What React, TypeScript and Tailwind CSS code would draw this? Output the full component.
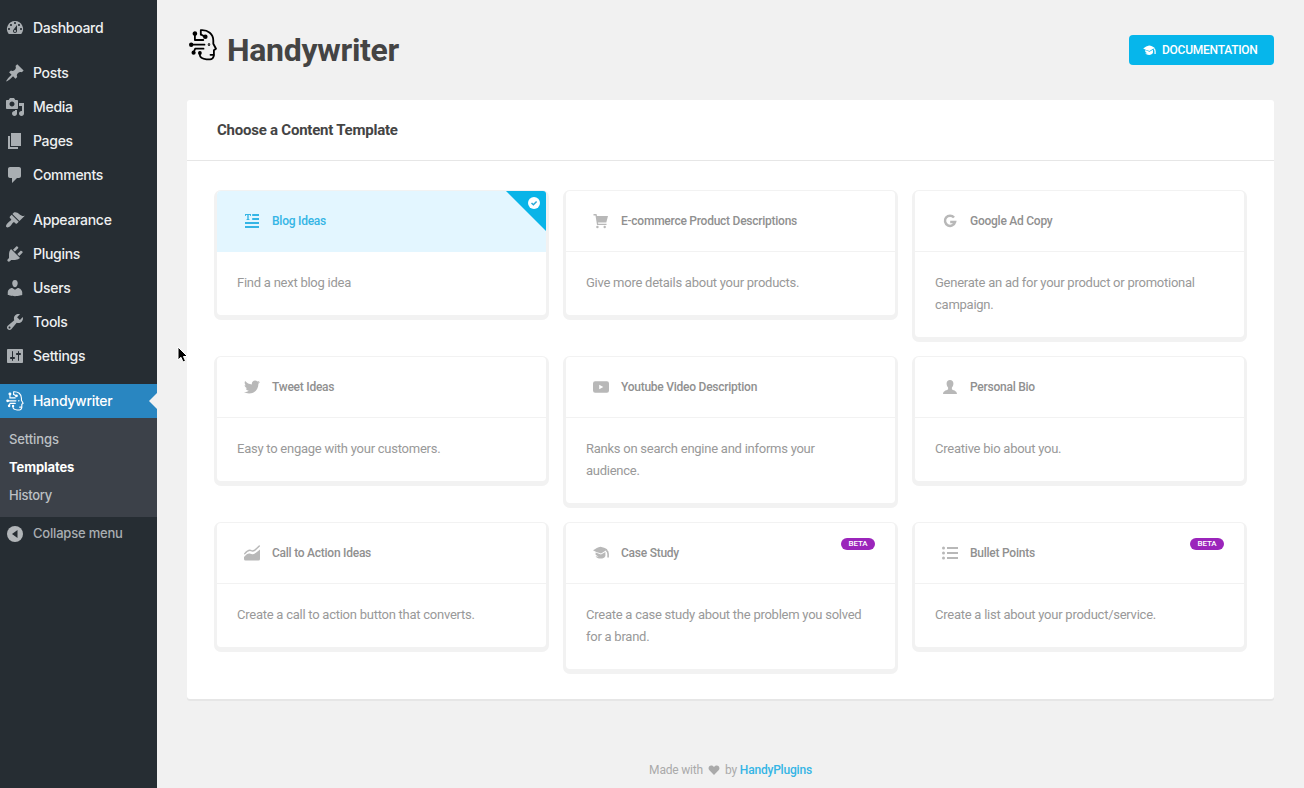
import React from "react";
import { FaTwitter } from "react-icons/fa";

const menuPaths = {
  dashboard:
    "M3.76 16h12.48A7.998 7.998 0 0 0 10 3a7.998 7.998 0 0 0-6.24 13zM10 4c.55 0 1 .45 1 1s-.45 1-1 1-1-.45-1-1 .45-1 1-1zM6 6c.55 0 1 .45 1 1s-.45 1-1 1-1-.45-1-1 .45-1 1-1zm8 0c.55 0 1 .45 1 1s-.45 1-1 1-1-.45-1-1 .45-1 1-1zm-5.37 5.55L12 7v6c0 1.1-.9 2-2 2s-2-.9-2-2c0-.57.24-1.08.63-1.45zM4 10c.55 0 1 .45 1 1s-.45 1-1 1-1-.45-1-1 .45-1 1-1zm12 0c.55 0 1 .45 1 1s-.45 1-1 1-1-.45-1-1 .45-1 1-1zm-5 3c0-.55-.45-1-1-1s-1 .45-1 1 .45 1 1 1 1-.45 1-1z",
  posts:
    "M10.44 3.02l1.82-1.82 6.36 6.35-1.83 1.82c-1.05-.68-2.48-.57-3.41.36l-.75.75c-.92.93-1.04 2.35-.35 3.41l-1.83 1.82-2.41-2.41-2.8 2.79c-.42.42-3.38 2.71-3.8 2.29s1.86-3.39 2.28-3.81l2.79-2.79L4.1 9.36l1.83-1.82c1.05.69 2.48.57 3.4-.36l.75-.75c.93-.92 1.05-2.35.36-3.41z",
  media:
    "M13 11V4c0-.55-.45-1-1-1h-1.67L9 1H5L3.67 3H2c-.55 0-1 .45-1 1v7c0 .55.45 1 1 1h10c.55 0 1-.45 1-1zM7 4.5c1.38 0 2.5 1.12 2.5 2.5S8.38 9.5 7 9.5 4.5 8.38 4.5 7 5.62 4.5 7 4.5zM14 6h5v10.5c0 1.38-1.12 2.5-2.5 2.5S14 17.88 14 16.5s1.12-2.5 2.5-2.5c.17 0 .34.02.5.05V9h-3V6zm-4 8.05V13h2v3.5c0 1.38-1.12 2.5-2.5 2.5S7 17.88 7 16.5 8.12 14 9.5 14c.17 0 .34.02.5.05z",
  pages: "M6 15V2h10v13H6zm-1 1h8v2H3V5h2v11z",
  comments:
    "M5 2h9c1.1 0 2 .9 2 2v7c0 1.1-.9 2-2 2h-2l-5 5v-5H5c-1.1 0-2-.9-2-2V4c0-1.1.9-2 2-2z",
  appearance:
    "M14.48 11.06L7.41 3.99l1.5-1.5c.5-.56 2.3-.47 3.51.32 1.21.8 1.43 1.28 2.91 2.1 1.18.64 2.45 1.26 4.45.85zm-.71.71L6.7 4.7 4.93 6.47c-.39.39-.39 1.02 0 1.41l1.06 1.06c.39.39.39 1.03 0 1.42-.6.6-1.43 1.11-2.21 1.69-.35.26-.7.53-1.01.84C1.43 14.23.4 16.08 1.4 17.07c.99 1 2.84-.03 4.18-1.36.31-.31.58-.66.85-1.02.57-.78 1.08-1.61 1.69-2.21.39-.39 1.02-.39 1.41 0l1.06 1.06c.39.39 1.02.39 1.41 0z",
  plugins:
    "M13.11 4.36L9.87 7.6 8 5.73l3.24-3.24c.35-.34 1.05-.2 1.56.32.52.51.66 1.21.31 1.55zm-8 1.77l.91-1.12 9.01 9.01-1.19.84c-.71.71-2.63 1.16-3.82 1.16H6.14L4.9 17.26c-.59.59-1.54.59-2.12 0-.59-.58-.59-1.53 0-2.12l1.24-1.24v-3.88c0-1.13.4-3.19 1.09-3.89zm7.26 3.97l3.24-3.24c.34-.35 1.04-.21 1.55.31.52.51.66 1.21.31 1.55l-3.24 3.25z",
  users:
    "M10 9.25c-2.27 0-2.73-3.44-2.73-3.44C7 4.02 7.82 2 9.97 2c2.16 0 2.98 2.02 2.71 3.81 0 0-.41 3.44-2.68 3.44zm0 2.57L12.72 10c2.39 0 4.52 2.33 4.52 4.53v2.49s-3.65 1.13-7.24 1.13c-3.65 0-7.24-1.13-7.24-1.13v-2.49c0-2.25 1.94-4.48 4.47-4.48z",
  tools:
    "M16.68 9.77c-1.34 1.34-3.3 1.67-4.95.99l-5.41 6.52c-.99.99-2.59.99-3.58 0s-.99-2.59 0-3.57l6.52-5.42c-.68-1.65-.35-3.61.99-4.95 1.28-1.28 3.12-1.62 4.72-1.06l-2.89 2.89 2.82 2.82 2.86-2.87c.53 1.58.18 3.39-1.08 4.65zM3.81 16.21c.4.39 1.04.39 1.43 0 .4-.4.4-1.04 0-1.43-.39-.4-1.03-.4-1.43 0-.39.39-.39 1.03 0 1.43z",
  settings:
    "M18 16V4c0-.55-.45-1-1-1H3c-.55 0-1 .45-1 1v12c0 .55.45 1 1 1h14c.55 0 1-.45 1-1zM8 11h1c.55 0 1 .45 1 1s-.45 1-1 1H8v1.5c0 .28-.22.5-.5.5s-.5-.22-.5-.5V13H6c-.55 0-1-.45-1-1s.45-1 1-1h1V5.5c0-.28.22-.5.5-.5s.5.22.5.5V11zm5-2h-1c-.55 0-1-.45-1-1s.45-1 1-1h1V5.5c0-.28.22-.5.5-.5s.5.22.5.5V7h1c.55 0 1 .45 1 1s-.45 1-1 1h-1v5.5c0 .28-.22.5-.5.5s-.5-.22-.5-.5V9z",
};

type MenuKey = keyof typeof menuPaths;

const menuGroups: [MenuKey, string][][] = [
  [["dashboard", "Dashboard"]],
  [
    ["posts", "Posts"],
    ["media", "Media"],
    ["pages", "Pages"],
    ["comments", "Comments"],
  ],
  [
    ["appearance", "Appearance"],
    ["plugins", "Plugins"],
    ["users", "Users"],
    ["tools", "Tools"],
    ["settings", "Settings"],
  ],
];

function HeadLogo({ className, stroke = 1.8 }: { className: string; stroke?: number }) {
  return (
    <svg viewBox="0 0 28 32" className={className} fill="none" stroke="currentColor" strokeWidth={stroke} strokeLinecap="round" strokeLinejoin="round">
      <path d="M11.8 5.5V1.2C19 .6 24.3 5 24.3 11.5v3.2l2.7 5-2.1 1.5v3.6c0 .7.2 1.4-.2 2.4-.6 1.8-1.6 3.2-3.6 3.2h-3.6C14 30 11 28.400 10.800 26v-2.500" />
      <path d="M5.900 5v6h8.400M12 5.500l4.200 2.400M2.300 15.700H15.500M4.600 23.500l1.600-3.800H14.500M21.500 25.800h3" />
      <circle cx="5.900" cy="4.600" r="1.400" fill="currentColor" />
      <circle cx="16.300" cy="7.700" r="1.400" fill="currentColor" />
      <circle cx="2.200" cy="15.700" r="1.300" fill="currentColor" />
      <circle cx="4.600" cy="23.700" r="1.200" fill="currentColor" />
      <circle cx="10.900" cy="24" r="1" fill="currentColor" />
      <circle cx="20" cy="15.600" r=".4" fill="currentColor" />
    </svg>
  );
}

function Cap({ className }: { className: string }) {
  return (
    <svg viewBox="0 0 16 14" className={className} fill="currentColor">
      <path d="M0 4.300C2.500 2.800 5 1 7.500.7c2.500.3 4.800 1.500 7 2.800L8 7.500C5 6.800 2.500 5.800 0 4.300z" />
      <path d="M2.600 6.500 8 8.600l4.400-2.700V10c-.8 1.800-2.500 2.600-4.800 2.600S3.400 11.800 2.600 10.200l3 .6-3-2z" />
      <path d="M13.200 4.200c1.300.8 1.900 2 1.900 3.800v3.500" fill="none" stroke="currentColor" strokeWidth="1.600" />
    </svg>
  );
}

const icons: Record<string, React.ReactNode> = {
  blog: (
    <svg viewBox="0 0 16 16" className="h-4 w-4" fill="currentColor">
      <path d="M1 1h6v2h-.700l-.4-.9H4.700v3.800l.8.300V7h-3v-.8l.8-.3V2.100H2.100L1.700 3H1zM8.200 1H15v2H8.200zM8.200 5H15v2H8.200zM1 9h14v2H1zM1 13h14v2H1z" />
    </svg>
  ),
  cart: (
    <svg viewBox="0 0 16 16" className="h-4 w-4" fill="currentColor">
      <path d="M.5 1h3l.5 2h11l-1.700 6.500H5l.2 1.300h8.300V12H4L2.500 2.500h-2z" />
      <circle cx="4.400" cy="14" r="1.200" />
      <circle cx="11.700" cy="14" r="1.200" />
    </svg>
  ),
  google: (
    <svg viewBox="0 0 16 16" className="h-4 w-4" fill="none" stroke="currentColor" strokeWidth="2.500">
      <path d="M12 4.500A5.100 5.100 0 1 0 13 9.100H8.200" />
    </svg>
  ),
  twitter: <FaTwitter className="h-4 w-4" />,
  youtube: (
    <svg viewBox="0 0 16 16" className="h-4 w-4" fill="currentColor" fillRule="evenodd">
      <path d="M2.300 2.200h11.400A2.200 2.200 0 0 1 16 4.400v7.200a2.200 2.200 0 0 1-2.300 2.200H2.300A2.200 2.200 0 0 1 0 11.600V4.400a2.200 2.200 0 0 1 2.300-2.200zM6.200 5.800v4.400L10.300 8z" />
    </svg>
  ),
  person: (
    <svg viewBox="0 0 16 16" className="h-4 w-4" fill="currentColor">
      <path d="M8 1c2.100 0 3.400 1.400 3.400 3.500 0 1.700-.6 3.100-1.500 4v1.700c.5 1 4.900 1 5.100 4.800H1c.2-3.800 4.600-3.800 5.100-4.800V8.500c-.9-.9-1.500-2.300-1.500-4C4.600 2.400 5.900 1 8 1z" />
    </svg>
  ),
  chart: (
    <svg viewBox="0 0 16 16" className="h-4 w-4" fill="currentColor">
      <path d="M0 12C2.800 8.600 4.800 7.800 6.500 8.800S10.500 9.600 16 4.600V14a1.500 1.500 0 0 1-1.500 1.500h-13A1.500 1.500 0 0 1 0 14z" />
      <path d="M.8 8.600C3.500 5.300 5.300 4.400 7.300 5.600c2.200 1.200 4-.6 8-4.600" fill="none" stroke="currentColor" strokeWidth="1.500" strokeLinecap="round" />
    </svg>
  ),
  cap: <Cap className="h-3.5 w-4" />,
  list: (
    <svg viewBox="0 0 16 16" className="h-4 w-4" fill="currentColor">
      <circle cx="1.500" cy="3" r="1.500" />
      <circle cx="1.500" cy="8" r="1.500" />
      <circle cx="1.500" cy="13" r="1.500" />
      <path d="M5 2h11v2H5zM5 7h11v2H5zM5 12h11v2H5z" />
    </svg>
  ),
};

type Template = {
  icon: string;
  title: string;
  text: string;
  active?: boolean;
  beta?: boolean;
};

const templates: Template[] = [
  { icon: "blog", title: "Blog Ideas", text: "Find a next blog idea", active: true },
  { icon: "cart", title: "E-commerce Product Descriptions", text: "Give more details about your products." },
  { icon: "google", title: "Google Ad Copy", text: "Generate an ad for your product or promotional campaign." },
  { icon: "twitter", title: "Tweet Ideas", text: "Easy to engage with your customers." },
  { icon: "youtube", title: "Youtube Video Description", text: "Ranks on search engine and informs your audience." },
  { icon: "person", title: "Personal Bio", text: "Creative bio about you." },
  { icon: "chart", title: "Call to Action Ideas", text: "Create a call to action button that converts." },
  { icon: "cap", title: "Case Study", text: "Create a case study about the problem you solved for a brand.", beta: true },
  { icon: "list", title: "Bullet Points", text: "Create a list about your product/service.", beta: true },
];

function TemplateCard({ t }: { t: Template }) {
  return (
    <div className="relative rounded-[4px] bg-white shadow-[0_2px_0_3px_#f2f2f2]">
      <div
        className={
          t.active
            ? "flex h-[61px] items-center rounded-t-[4px] border-b border-[#e3f6ff] bg-[#e3f6ff] pl-[27px] text-[#35b5e5]"
            : "flex h-[61px] items-center border-b border-[#f2f2f2] pl-[27px] text-[#b8b8b8]"
        }
      >
        <span className="flex w-4 justify-center">{icons[t.icon]}</span>
        <span
          className={
            t.active
              ? "ml-3 text-[12px] font-medium tracking-[-0.25px]"
              : "ml-3 text-[12px] font-medium tracking-[-0.25px] text-[#909090]"
          }
        >
          {t.title}
        </span>
      </div>
      <p className="pt-[20px] pr-[30px] pb-[21px] pl-5 text-[13px] leading-[22px] tracking-[-0.25px] text-[#999]">{t.text}</p>
      {t.active && (
        <svg viewBox="0 0 40 40" className="absolute top-0 right-0 h-10 w-10">
          <path d="M0 0h37a3 3 0 0 1 3 3v37z" fill="#09b4e8" />
          <circle cx="28" cy="12" r="6" fill="#fff" />
          <path d="M25.500 12l1.900 1.800 3.200-3.400" fill="none" stroke="#2aa9d6" strokeWidth="1.500" />
        </svg>
      )}
      {t.beta && (
        <span className="absolute top-[15px] right-[20px] flex h-3 w-[34px] items-center justify-center rounded-full bg-[#9b25bb] text-[8px] font-medium tracking-[-0.15px] text-white">
          BETA
        </span>
      )}
    </div>
  );
}

function Sidebar() {
  return (
    <aside className="flex w-[157px] shrink-0 flex-col bg-[#262d33] pt-[11px] font-['Inter',sans-serif] text-[14px] font-medium tracking-[-0.3px] text-[#eef0f1]">
      {menuGroups.map((group, i) => (
        <nav key={i} className="mb-[11px]">
          {group.map(([key, label]) => (
            <a key={key} className="flex h-[34px] items-center pl-[5px]">
              <svg viewBox="0 0 20 20" className="h-5 w-5 text-[#a9aeb2]" fill="currentColor">
                <path d={menuPaths[key]} />
              </svg>
              <span className="ml-2 pb-0.5">{label}</span>
            </a>
          ))}
        </nav>
      ))}
      <a className="relative flex h-[34px] items-center bg-[#2986c1] pl-[6px] text-white">
        <HeadLogo className="h-5 w-[18px]" />
        <span className="ml-[9px] pb-0.5">Handywriter</span>
        <svg viewBox="0 0 8 16" className="absolute top-[9px] right-0 h-4 w-2">
          <path d="M8 0v16L0 8z" fill="#f1f1f1" />
        </svg>
      </a>
      <div className="flex h-[99px] flex-col bg-[#3c4149] pt-2 pl-[9px] text-[13px] tracking-[-0.1px] text-[#bdc0c4]">
        <a className="flex h-7 items-center">Settings</a>
        <a className="flex h-7 items-center font-bold text-white">Templates</a>
        <a className="flex h-7 items-center tracking-[-0.25px]">History</a>
      </div>
      <a className="flex h-[34px] items-center pl-[5px] text-[13px] tracking-[-0.2px] text-[#a9aeb2]">
        <svg viewBox="0 0 20 20" className="h-5 w-5">
          <circle cx="10" cy="10" r="8" fill="#b2b6b9" />
          <path d="M12.500 6v8L7 10z" fill="#262d33" />
        </svg>
        <span className="ml-2">Collapse menu</span>
      </a>
    </aside>
  );
}

export default function App() {
  return (
    <div className="relative flex h-[788px] w-[1304px] overflow-hidden bg-[#f1f1f1] font-['Roboto',sans-serif]">
      <Sidebar />
      <main className="flex flex-1 flex-col pr-[30px] pl-[30px]">
        <header className="flex h-[100px] items-center justify-between">
          <div className="flex items-center text-[#444]">
            <HeadLogo className="mb-[10px] ml-[2px] h-8 w-7 text-black" />
            <h1 className="ml-[10px] text-[32px] leading-[40px] font-bold tracking-[-0.3px]">Handywriter</h1>
          </div>
          <a className="flex h-[30px] w-[145px] items-center rounded-[4px] bg-[#06b6eb] pl-[14px] text-[12px] font-medium tracking-[-0.25px] text-white">
            <Cap className="h-[11px] w-[13px]" />
            <span className="ml-[6px]">DOCUMENTATION</span>
          </a>
        </header>
        <section className="h-[599px] rounded-[3px] bg-white shadow-[0_2px_0_#e6e6e6]">
          <h2 className="flex h-[61px] items-center border-b border-[#e6e6e6] pl-[30px] text-[15px] font-bold tracking-[-0.23px] text-[#444]">
            Choose a Content Template
          </h2>
          <div className="grid grid-cols-[329px_329px_329px] items-start gap-5 pt-[30px] pl-[30px]">
            {templates.map((t) => (
              <TemplateCard key={t.title} t={t} />
            ))}
          </div>
        </section>
        <footer className="mt-[60px] flex h-[22px] items-center justify-center text-[12px] tracking-[-0.2px] text-[#aaa]">
          <span>Made with</span>
          <svg viewBox="0 0 12 12" className="mx-[5px] h-3 w-3" fill="#aaa">
            <path d="M6 11 1.400 6.300C-.4 4.300.8 1.500 3.200 1.500 4.500 1.500 5.500 2.200 6 3c.5-.8 1.500-1.500 2.800-1.500 2.400 0 3.600 2.800 1.800 4.800z" />
          </svg>
          <span>by</span>
          <a className="ml-[3px] font-medium text-[#35b5e5]">HandyPlugins</a>
        </footer>
      </main>
      <svg viewBox="0 0 12 18" className="absolute top-[346px] left-[177px] h-[18px] w-3">
        <path d="M1 1v13l3-2.700 2 4.700 2.500-1-2-4.500h4z" fill="#000" stroke="#fff" strokeWidth="1" />
      </svg>
    </div>
  );
}
